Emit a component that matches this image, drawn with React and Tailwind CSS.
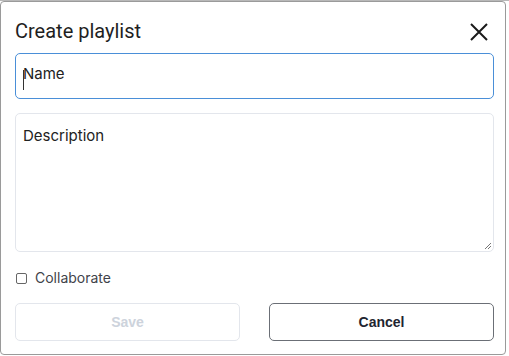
import React from "react";

export default function App() {
  return (
    <div className="w-[509px] h-[356px] bg-white relative overflow-hidden">
      <div className="h-[1px] w-full bg-[#b8b8b8]" />
      <div className="w-[506px] h-[354px] border border-[#9a9a9a] rounded-[4px] bg-white flex flex-col font-['Inter',sans-serif]">
        <div className="flex items-center justify-between pl-[14px] pr-[16px] pt-[16px] h-[42px]">
          <span className="text-[20px] leading-[24px] text-[#1f1f1f] font-['Roboto',sans-serif]">Create playlist</span>
          <svg width="20" height="20" viewBox="0 0 20 20" className="mt-[1px]">
            <path d="M2 2 L18 18 M18 2 L2 18" stroke="#1a1a1a" strokeWidth="2" strokeLinecap="butt" fill="none" />
          </svg>
        </div>
        <div className="pl-[14px] mt-[9px]">
          <div className="w-[479px] h-[46px] border border-[#4a8fd8] rounded-[5px] flex items-center pl-[7px] relative">
            <span className="w-[1px] h-[20px] bg-[#333] mt-[8px]" />
            <span className="text-[15px] text-[#222] -ml-[1px] -mt-[3px]">Name</span>
          </div>
        </div>
        <div className="pl-[14px] mt-[14px]">
          <div className="w-[479px] h-[139px] border border-[#e3e6ec] rounded-[5px] relative pl-[7px] pt-[9px]">
            <span className="text-[15px] text-[#222]">Description</span>
            <svg width="8" height="8" viewBox="0 0 8 8" className="absolute right-[1px] bottom-[1px]">
              <path d="M7 1 L1 7 M7 4 L4 7" stroke="#777" strokeWidth="1" fill="none" />
            </svg>
          </div>
        </div>
        <div className="pl-[15px] mt-[18px] flex items-center gap-[8px]">
          <span className="w-[11px] h-[11px] border border-[#666] rounded-[2px]" />
          <span className="text-[14px] text-[#3f434a] leading-[16px]">Collaborate</span>
        </div>
        <div className="pl-[14px] mt-[17px] flex gap-[29px]">
          <div className="w-[225px] h-[38px] border border-[#e3e6ec] rounded-[5px] flex items-center justify-center">
            <span className="text-[14px] font-bold text-[#cdd3dc] font-['Liberation_Sans',sans-serif]">Save</span>
          </div>
          <div className="w-[225px] h-[38px] border border-[#6b6f76] rounded-[5px] flex items-center justify-center">
            <span className="text-[14px] font-bold text-[#1f2530] font-['Liberation_Sans',sans-serif]">Cancel</span>
          </div>
        </div>
      </div>
    </div>
  );
}
